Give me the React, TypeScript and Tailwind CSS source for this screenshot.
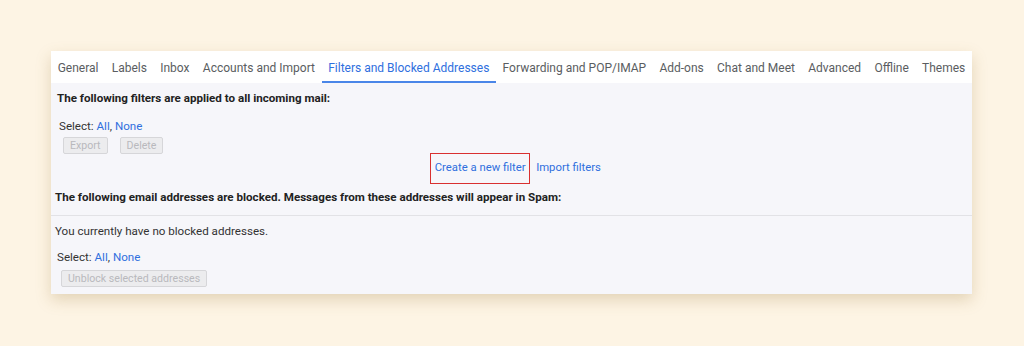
const tabs = [
  'General',
  'Labels',
  'Inbox',
  'Accounts and Import',
  'Filters and Blocked Addresses',
  'Forwarding and POP/IMAP',
  'Add-ons',
  'Chat and Meet',
  'Advanced',
  'Offline',
  'Themes',
]

function SelectRow() {
  return (
    <div className="text-[11.6px] text-[#333]">
      Select: <span className="text-[#2f6fde]">All</span>, <span className="text-[#2f6fde]">None</span>
    </div>
  )
}

function DisabledButton({ label }: { label: string }) {
  return (
    <span className="inline-block rounded-[2px] border border-[#d6d6d9] bg-[#ececee] px-[6px] h-[17px] leading-[15px] text-[10.6px] text-[#b9b9bd]">
      {label}
    </span>
  )
}

export default function App() {
  return (
    <div
      className="w-[1024px] h-[346px] bg-[#fdf4e4] pt-[51px] pl-[51px]"
      style={{ fontFamily: 'Roboto, "Liberation Sans", sans-serif' }}
    >
      <div className="w-[921px] h-[243px] bg-[#f6f6fa] shadow-[0_6px_14px_rgba(160,130,70,0.28)]">
        <div className="flex h-[32px] items-stretch bg-white">
          {tabs.map((t) => {
            const active = t === 'Filters and Blocked Addresses'
            return (
              <div
                key={t}
                className={`flex shrink-0 items-center whitespace-nowrap pt-[3px] px-[6.65px] text-[12px] border-b-2 ${
                  active ? 'text-[#2f6fde] border-[#4a86e8]' : 'text-[#5a5d61] border-transparent'
                }`}
              >
                {t}
              </div>
            )
          })}
        </div>

        <div className="px-[6px] pt-[7px]">
          <div className="text-[11.6px] font-bold text-[#222] leading-[16px]">
            The following filters are applied to all incoming mail:
          </div>
          <div className="mt-[13px] pl-[2px] leading-[15px]">
            <SelectRow />
          </div>
          <div className="mt-[3px] flex gap-[12px] pl-[6px]">
            <DisabledButton label="Export" />
            <DisabledButton label="Delete" />
          </div>
          <div className="flex justify-center items-center gap-[6px] -mt-[1px] pl-[8px]">
            <div className="border border-[#d93030] h-[31px] w-[100px] justify-center flex items-center text-[11.3px] text-[#2f6fde]">
              Create a new filter
            </div>
            <div className="text-[11.3px] text-[#2f6fde]">Import filters</div>
          </div>
        </div>

        <div className="mt-[5px] px-[4px] pb-[10px] border-b border-[#e2e2e6] text-[11.6px] font-bold text-[#222] leading-[16px]">
          The following email addresses are blocked. Messages from these addresses will appear in Spam:
        </div>

        <div className="px-[4px] pt-[7px]">
          <div className="text-[11.6px] text-[#333] leading-[16px]">You currently have no blocked addresses.</div>
          <div className="mt-[11px] pl-[2px] leading-[14px]">
            <SelectRow />
          </div>
          <div className="mt-[1px] pl-[6px]">
            <DisabledButton label="Unblock selected addresses" />
          </div>
        </div>
      </div>
    </div>
  )
}
